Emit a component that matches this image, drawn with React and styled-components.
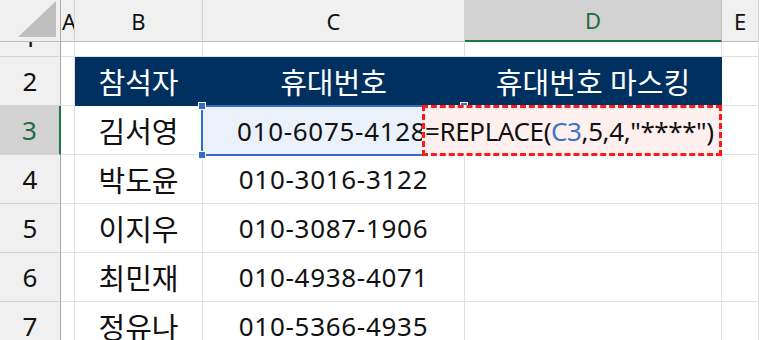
import React from "react"
import styled, { createGlobalStyle, css } from "styled-components"

const FONT = `"Noto Sans", "Noto Sans CJK KR", sans-serif`

const GlobalStyle = createGlobalStyle`
  html, body {
    margin: 0;
    padding: 0;
    background: #ffffff;
  }
  body {
    font-family: ${FONT};
    color: #111111;
  }
`

const Sheet = styled.div`
  display: grid;
  grid-template-columns: 61px 14px 128px 262px 257px 1fr;
  grid-template-rows: 42px 15px repeat(6, 49px);
  width: 759px;
  height: 340px;
  overflow: hidden;
  font-family: ${FONT};
`

const Corner = styled.div`
  position: relative;
  background: #f0f0f0;
  border-right: 1px solid #a9a9a9;
  border-bottom: 1px solid #bdbdbd;
  &::after {
    content: "";
    position: absolute;
    right: 4px;
    bottom: 4px;
    width: 38px;
    height: 36px;
    background: #bfbfbf;
    clip-path: polygon(100% 0, 100% 100%, 0 100%);
  }
`

const ColHead = styled.div`
  display: flex;
  align-items: center;
  justify-content: ${p => (p.$left ? "flex-start" : "center")};
  overflow: hidden;
  background: #f0f0f0;
  border-right: 1px solid #d4d4d4;
  border-bottom: 1px solid #bdbdbd;
  font-size: 22px;
  color: #111;
  padding-left: ${p => (p.$left ? "1px" : "0")};
  ${p =>
    p.$active &&
    css`
      background: #d2d2d2;
      color: #1e6b41;
      border-bottom: 2px solid #217346;
      border-right-color: #c4c4c4;
    `}
`

const RowHead = styled.div`
  display: flex;
  align-items: center;
  justify-content: center;
  overflow: hidden;
  background: #f0f0f0;
  border-right: 1px solid #a9a9a9;
  border-bottom: 1px solid #d4d4d4;
  font-size: 26px;
  color: #111;
  ${p =>
    p.$active &&
    css`
      background: #d2d2d2;
      color: #1e6b41;
      border-right: 2px solid #217346;
    `}
`

const ClippedDigit = styled.span`
  display: block;
  line-height: 26px;
  margin-top: -24px;
`

const Cell = styled.div`
  display: flex;
  align-items: center;
  justify-content: center;
  border-right: 1px solid #e1e1e1;
  border-bottom: 1px solid #e1e1e1;
  font-size: 29px;
  white-space: nowrap;
  ${p =>
    p.$title &&
    css`
      background: #00305f;
      color: #ffffff;
      border-right-color: #00305f;
      border-bottom-color: #00305f;
    `}
`

const Phone = styled.span`
  font-size: 26px;
  letter-spacing: 0.7px;
`

const RefCell = styled(Cell)`
  position: relative;
  justify-content: flex-start;
  padding-left: 34px;
  overflow: visible;
  background: #ebf1fb;
  border: 2px solid #2f6dc6;
  margin: -1px 0 -1px -2px;
  z-index: 1;
`

const Handle = styled.span`
  position: absolute;
  width: 6px;
  height: 6px;
  background: #2f6dc6;
  border: 1px solid #ffffff;
  left: -5px;
  ${p => (p.$bottom ? "bottom: -5px;" : "top: -5px;")}
  ${p => p.$right && "left: auto; right: -5px;"}
`

const EditCell = styled(Cell)`
  position: relative;
  z-index: 2;
`

const Editor = styled.div`
  position: absolute;
  top: -1px;
  bottom: -2px;
  left: -43px;
  right: -1px;
  display: flex;
  align-items: center;
  background: #fff0f0;
  border: 3px dashed #ff1a1a;
  font-size: 26px;
  letter-spacing: -0.4px;
  color: #111;
  box-sizing: border-box;
`

const RefText = styled.span`
  color: #3a75c4;
`

const names = [
  ["김서영", "010-6075-4128"],
  ["박도윤", "010-3016-3122"],
  ["이지우", "010-3087-1906"],
  ["최민재", "010-4938-4071"],
  ["정유나", "010-5366-4935"],
]

const columns = ["A", "B", "C", "D", "E"]

const App = () => {
  return (
    <>
      <GlobalStyle />
      <Sheet>
        <Corner />
        {columns.map(c => (
          <ColHead key={c} $active={c === "D"} $left={c === "A"}>
            {c}
          </ColHead>
        ))}

        <RowHead>
          <ClippedDigit>1</ClippedDigit>
        </RowHead>
        <Cell />
        <Cell />
        <Cell />
        <Cell />
        <Cell />

        <RowHead>2</RowHead>
        <Cell />
        <Cell $title>참석자</Cell>
        <Cell $title>휴대번호</Cell>
        <Cell $title>휴대번호 마스킹</Cell>
        <Cell />

        {names.map(([name, phone], i) => {
          const row = i + 3
          const editing = row === 3
          return (
            <React.Fragment key={row}>
              <RowHead $active={editing}>{row}</RowHead>
              <Cell />
              <Cell>{name}</Cell>
              {editing ? (
                <RefCell>
                  <Phone>{phone}</Phone>
                  <Handle />
                  <Handle $bottom />
                  <Handle $right />
                </RefCell>
              ) : (
                <Cell>
                  <Phone>{phone}</Phone>
                </Cell>
              )}
              {editing ? (
                <EditCell>
                  <Editor>
                    =REPLACE(<RefText>C3</RefText>,5,4,"****")
                  </Editor>
                </EditCell>
              ) : (
                <Cell />
              )}
              <Cell />
            </React.Fragment>
          )
        })}
      </Sheet>
    </>
  )
}

export default App
